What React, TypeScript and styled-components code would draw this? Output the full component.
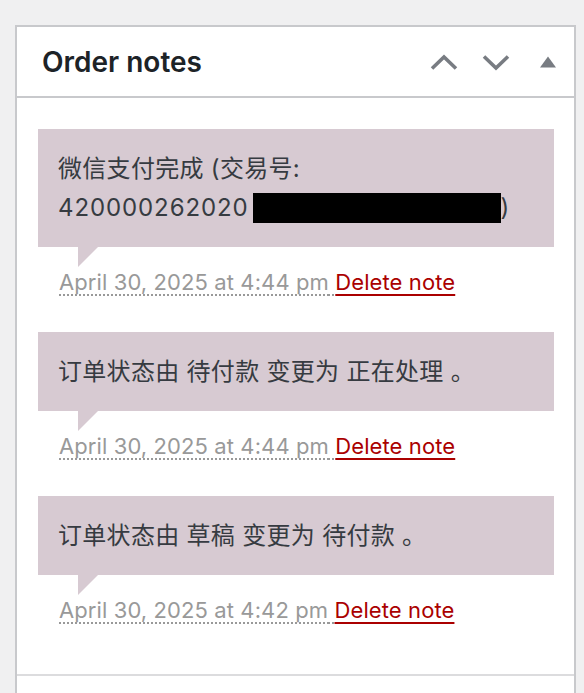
import React, { FC, ReactNode } from "react"
import styled, { createGlobalStyle } from "styled-components"

const GlobalStyle = createGlobalStyle`
    html, body {
        margin: 0;
        padding: 0;
        background: #f0f0f1;
    }
`

const StyledPage = styled.div`
    padding: 25px 8px 0 15px;
    font-family: "Inter", "Noto Sans CJK SC", sans-serif;
`

const StyledPostbox = styled.div`
    background: #fff;
    border: 2px solid #c8c9cc;
    border-bottom: none;
`

const StyledHeader = styled.div`
    height: 69px;
    display: flex;
    align-items: center;
    justify-content: space-between;
    padding-left: 25px;
    border-bottom: 2px solid #c8c9cc;
`

const StyledTitle = styled.h2`
    margin: 0;
    font-size: 28px;
    font-weight: 600;
    color: #1d2327;
`

const StyledActions = styled.div`
    display: flex;
    height: 100%;
`

const StyledHandleButton = styled.button`
    width: 52px;
    height: 100%;
    padding: 0;
    border: none;
    background: none;
    display: flex;
    align-items: center;
    justify-content: center;
    color: #787c82;
    cursor: pointer;
`

const StyledInside = styled.div`
    padding: 31px 20px 31px 21px;
`

const StyledNotesList = styled.ul`
    list-style: none;
    margin: 0;
    padding: 0;
`

const StyledNote = styled.li`
    margin: 0 0 17px;

    &:last-child {
        margin-bottom: 0;
    }
`

const StyledNoteContent = styled.div<{ $tone: string }>`
    position: relative;
    background: ${props => props.$tone};
    padding: 20px;
    font-size: 24px;
    line-height: 39px;
    color: #363b41;
    letter-spacing: 0.3px;

    &::after {
        content: "";
        position: absolute;
        left: 40px;
        bottom: -20px;
        border-style: solid;
        border-width: 20px 20px 0 0;
        border-color: ${props => props.$tone} transparent;
    }
`

const StyledNumber = styled.span`
    letter-spacing: 0.9px;
`

const StyledRedacted = styled.span`
    display: inline-block;
    width: 248px;
    height: 30px;
    margin-left: 4px;
    background: #000;
    vertical-align: -7px;
`

const StyledMeta = styled.p`
    margin: 0;
    padding: 20px 21px 18px;
    font-size: 22px;
    line-height: 30px;
    color: #999;
    letter-spacing: 0.1px;
`

const StyledExactDate = styled.abbr`
    text-decoration: underline dotted;
    text-decoration-thickness: 2px;
    text-underline-offset: 4px;
    cursor: help;
`

const StyledDeleteNote = styled.a`
    color: #a00;
    text-decoration: underline;
    text-decoration-thickness: 2px;
    text-underline-offset: 4px;
`

const StyledFooter = styled.div`
    height: 40px;
    border-top: 2px solid #dcdcde;
`

const ChevronIcon: FC<{ up?: boolean }> = ({ up = false }) => (
    <svg width="28" height="18" viewBox="0 0 28 18">
        <polyline
            points={up ? "2,15.5 14,4 26,15.5" : "2,3.5 14,15 26,3.5"}
            fill="none"
            stroke="currentColor"
            strokeWidth="3.6"
        />
    </svg>
)

const TriangleIcon: FC = () => (
    <svg width="18" height="14" viewBox="0 0 18 14">
        <polygon points="1,12.5 9,1.5 17,12.5" fill="currentColor" />
    </svg>
)

const Note: FC<{ date: string, children: ReactNode }> = ({ date, children }) => (
    <StyledNote>
        <StyledNoteContent $tone="#d7cad2">{children}</StyledNoteContent>
        <StyledMeta>
            <StyledExactDate title={date}>{date} </StyledExactDate>
            <StyledDeleteNote href="#">Delete note</StyledDeleteNote>
        </StyledMeta>
    </StyledNote>
)

export default function App() {
    return (
        <StyledPage>
            <GlobalStyle />
            <StyledPostbox>
                <StyledHeader>
                    <StyledTitle>Order notes</StyledTitle>
                    <StyledActions>
                        <StyledHandleButton aria-label="Move up"><ChevronIcon up /></StyledHandleButton>
                        <StyledHandleButton aria-label="Move down"><ChevronIcon /></StyledHandleButton>
                        <StyledHandleButton aria-label="Toggle panel"><TriangleIcon /></StyledHandleButton>
                    </StyledActions>
                </StyledHeader>
                <StyledInside>
                    <StyledNotesList>
                        <Note date="April 30, 2025 at 4:44 pm">
                            微信支付完成 (交易号:
                            <br />
                            <StyledNumber>420000262020</StyledNumber><StyledRedacted />)
                        </Note>
                        <Note date="April 30, 2025 at 4:44 pm">
                            订单状态由 待付款 变更为 正在处理 。
                        </Note>
                        <Note date="April 30, 2025 at 4:42 pm">
                            订单状态由 草稿 变更为 待付款 。
                        </Note>
                    </StyledNotesList>
                </StyledInside>
                <StyledFooter />
            </StyledPostbox>
        </StyledPage>
    )
}
